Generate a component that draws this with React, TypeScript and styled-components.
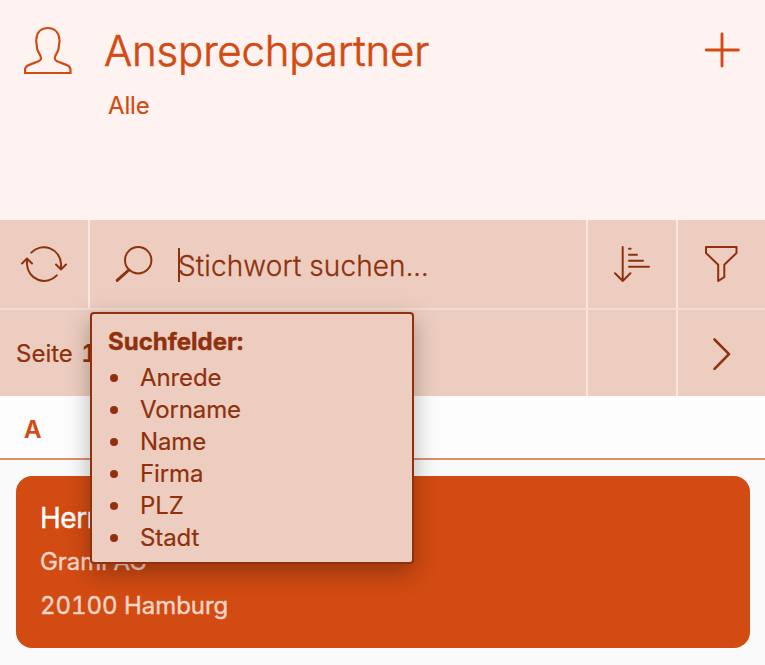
import React from "react";
import styled, { createGlobalStyle } from "styled-components";

const color = {
  accent: "#d24b12",
  dark: "#8f310d",
  blush: "#fff3f1",
  sand: "#edcdc0",
};

const GlobalStyle = createGlobalStyle`
  * { box-sizing: border-box; }
  body {
    margin: 0;
    background: #fafafa;
    font-family: Inter, "Liberation Sans", sans-serif;
    font-variant-numeric: tabular-nums;
    -webkit-text-stroke: 0.2px currentColor;
    overflow: hidden;
  }
`;

const Page = styled.main`
  height: 665px;
  display: flex;
  flex-direction: column;
`;

const Header = styled.header`
  height: 220px;
  flex: none;
  display: flex;
  padding: 24px 24px 0;
  background: ${color.blush};
  color: ${color.accent};
`;

const HeaderIcon = styled.div`
  width: 48px;
  margin-right: 32px;
  svg { display: block; }
`;

const Headings = styled.div`
  flex: 1;
`;

const Title = styled.h1`
  margin: 0;
  font-size: 42px;
  line-height: 54px;
  font-weight: 300;
  letter-spacing: -0.2px;
  -webkit-text-stroke-width: 0.6px;
`;

const Subtitle = styled.div`
  margin-top: 12px;
  padding-left: 4px;
  font-size: 24px;
  line-height: 32px;
  letter-spacing: -0.15px;
`;

const AddButton = styled.button`
  width: 40px;
  height: 52px;
  padding: 0;
  border: 0;
  background: none;
  color: inherit;
  svg { display: block; }
`;

const Bar = styled.div<{ $height: number; $columns: string }>`
  flex: none;
  display: grid;
  grid-template-columns: ${(p) => p.$columns};
  column-gap: 2px;
  height: ${(p) => p.$height}px;
  background: #f8e6df;
  color: ${color.dark};
`;

const Cell = styled.div`
  display: flex;
  align-items: center;
  justify-content: center;
  background: ${color.sand};
  svg { display: block; }
`;

const Divider = styled.div`
  flex: none;
  height: 2px;
  background: #f3dcd3;
`;

const SearchCell = styled(Cell)`
  position: relative;
  justify-content: flex-start;
  padding-left: 24px;
`;

const Caret = styled.span`
  width: 2px;
  height: 34px;
  margin: 2px -2px 0 24px;
  background: ${color.dark};
`;

const Placeholder = styled.span`
  font-size: 28px;
  line-height: 40px;
  font-weight: 300;
  letter-spacing: 0.12px;
  -webkit-text-stroke-width: 0.3px;
  margin-top: 4px;
`;

const PageCell = styled(Cell)`
  justify-content: flex-start;
  padding-left: 16px;
  font-size: 24px;
  white-space: pre;
  b { font-weight: 600; margin-left: 2px; }
`;

const Popup = styled.div`
  position: absolute;
  z-index: 2;
  left: 0;
  top: 92px;
  width: 324px;
  height: 252px;
  padding: 12px 16px;
  border: 2px solid ${color.dark};
  border-radius: 4px;
  background: ${color.sand};
  box-shadow: 0 8px 24px rgba(0, 0, 0, 0.3);
  font-size: 24px;
  line-height: 32px;
`;

const PopupTitle = styled.div`
  font-weight: 700;
  margin-bottom: 4px;
  -webkit-text-stroke-width: 0.4px;
`;

const FieldList = styled.ul`
  margin: 0;
  padding: 0;
  list-style: none;
`;

const Field = styled.li`
  display: flex;
  align-items: center;
  letter-spacing: -0.12px;
  &::before {
    content: "";
    width: 8px;
    height: 8px;
    margin: 0 22px 1px 2px;
    border-radius: 50%;
    background: ${color.dark};
  }
`;

const SectionHead = styled.div`
  flex: none;
  height: 64px;
  padding: 18px 24px 0;
  border-bottom: 2px solid #df8d6e;
  background: #fdfdfd;
  color: ${color.accent};
  font-size: 24px;
  line-height: 32px;
  font-weight: 600;
`;

const Card = styled.article`
  flex: none;
  width: 734px;
  height: 172px;
  margin: 16px;
  padding: 24px 24px 0;
  border-radius: 16px;
  background: ${color.accent};
  color: #fad5c8;
  -webkit-text-stroke-width: 0.4px;
`;

const Name = styled.div`
  font-size: 28px;
  line-height: 36px;
  letter-spacing: -0.5px;
  color: #fff;
  -webkit-text-stroke-color: #fff;
`;

const Line = styled.div`
  font-size: 24px;
  line-height: 32px;
  margin-top: 10px;
  letter-spacing: -0.05px;
  & + & { margin-top: 12px; }
`;

const PersonIcon = () => (
  <svg width="48" height="52" viewBox="0 0 48 52" fill="none" stroke="currentColor" strokeWidth="2.200">
    <path d="M1 49h45.500v-3.200c0-2-.9-3.300-2.800-4.300-3.800-2-7.800-2.900-11.200-4.500-1.700-.8-2-2.200-1.500-4.200.4-1.800 2.700-4.600 3.500-7.800.5-2.200.2-3 .5-4.500.5-1.600.7-3.300.4-5.100C34.700 8.200 30.200 4 23.800 4S12.800 8.200 12.300 15.400c-.2 1.800 0 3.500.4 5.100.3 1.500 0 2.300.5 4.500.8 3.200 3.200 6 3.600 7.800.5 2 .1 3.400-1.600 4.200-3.400 1.600-7.600 2.500-11.400 4.500C1.900 42.500 1 43.800 1 45.800z" />
  </svg>
);

const PlusIcon = () => (
  <svg width="40" height="52" viewBox="0 0 40 52" fill="none" stroke="currentColor" strokeWidth="2.900" strokeLinecap="round">
    <path d="M5.200 26h32.200M21 9.900v32.200" />
  </svg>
);

const RefreshIcon = () => (
  <svg width="48" height="40" viewBox="0 0 48 40" fill="none" stroke="currentColor" strokeWidth="2" strokeLinecap="round" strokeLinejoin="round">
    <path d="M11.300 8.600A17.200 17.200 0 0 1 41 20v5.500M36 20.500l5 5 5-5M36.800 31.400A17.200 17.200 0 0 1 7 20v-5.500M2 19.500l5-5 5 5" />
  </svg>
);

const SearchIcon = () => (
  <svg width="40" height="40" viewBox="0 0 40 40" fill="none" stroke="currentColor" strokeLinecap="round">
    <circle cx="24.200" cy="16.200" r="13.200" strokeWidth="2" />
    <path d="M14.800 26 3.200 36.400" strokeWidth="3" />
  </svg>
);

const SortIcon = () => (
  <svg width="40" height="40" viewBox="0 0 40 40" fill="none" stroke="currentColor" strokeWidth="2" strokeLinecap="round" strokeLinejoin="round">
    <path d="M10.700 3v34M3 29.300l7.700 7.700 7.700-7.700M17 4.700h1.600M17 10.700h8M17 16.700h14M17 22.700h20" />
  </svg>
);

const FilterIcon = () => (
  <svg width="40" height="40" viewBox="0 0 40 40" fill="none" stroke="currentColor" strokeWidth="2" strokeLinejoin="round">
    <path d="M4 3h30.500v6L22.300 20.800v12.400L16.200 37V20.800L4 9z" />
  </svg>
);

const NextIcon = () => (
  <svg width="40" height="40" viewBox="0 0 40 40" fill="none" stroke="currentColor" strokeWidth="2.600" strokeLinecap="round" strokeLinejoin="round">
    <path d="m12.500 6.500 14.500 14.700L12.500 35.800" />
  </svg>
);

const fields = ["Anrede", "Vorname", "Name", "Firma", "PLZ", "Stadt"];

export default function App() {
  return (
    <>
      <GlobalStyle />
      <Page>
        <Header>
          <HeaderIcon><PersonIcon /></HeaderIcon>
          <Headings>
            <Title>Ansprechpartner</Title>
            <Subtitle>Alle</Subtitle>
          </Headings>
          <AddButton aria-label="Neu"><PlusIcon /></AddButton>
        </Header>
        <Bar $height={88} $columns="88px 496px 88px 1fr">
          <Cell><RefreshIcon /></Cell>
          <SearchCell>
            <SearchIcon />
            <Caret />
            <Placeholder>Stichwort suchen...</Placeholder>
            <Popup>
              <PopupTitle>Suchfelder:</PopupTitle>
              <FieldList>
                {fields.map((f) => <Field key={f}>{f}</Field>)}
              </FieldList>
            </Popup>
          </SearchCell>
          <Cell><SortIcon /></Cell>
          <Cell><FilterIcon /></Cell>
        </Bar>
        <Divider />
        <Bar $height={86} $columns="586px 88px 1fr">
          <PageCell>Seite <b>1</b></PageCell>
          <Cell />
          <Cell><NextIcon /></Cell>
        </Bar>
        <SectionHead>A</SectionHead>
        <Card>
          <Name>Herr</Name>
          <Line>Graml AG</Line>
          <Line>20100 Hamburg</Line>
        </Card>
      </Page>
    </>
  );
}
